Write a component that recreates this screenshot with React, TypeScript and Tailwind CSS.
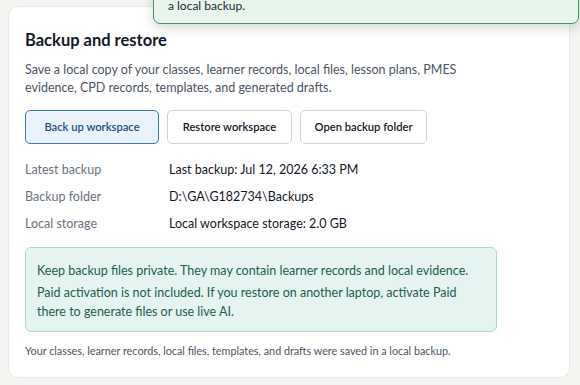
import React from "react";

const font = { fontFamily: 'Lato, "Noto Sans", sans-serif' };

export default function App() {
  return (
    <div className="relative w-[580px] h-[385px] overflow-hidden bg-[#f3f5f1]" style={font}>
      <div className="absolute left-[8px] top-[6px] w-[562px] h-[372px] rounded-[10px] border border-[#e6e9ec] bg-white px-[16px] pt-[21px]">
        <h2 className="text-[16.5px] leading-[24px] font-bold text-[#111827]">Backup and restore</h2>
        <p className="mt-[9px] text-[12.5px] leading-[18px] text-[#4b5563] w-[470px]">
          Save a local copy of your classes, learner records, local files, lesson plans, PMES evidence, CPD records, templates, and generated drafts.
        </p>
        <div className="mt-[13px] flex gap-[8px]">
          <button className="h-[34px] w-[134px] rounded-[5px] border border-[#3b78b8] bg-[#eaf3fd] text-[11.2px] font-semibold text-[#1d4f86]">
            Back up workspace
          </button>
          <button className="h-[34px] w-[125px] rounded-[5px] border border-[#cbd3de] bg-white text-[11.2px] font-semibold text-[#111827]">
            Restore workspace
          </button>
          <button className="h-[34px] w-[127px] rounded-[5px] border border-[#cbd3de] bg-white text-[11.2px] font-semibold text-[#111827]">
            Open backup folder
          </button>
        </div>
        <div className="mt-[17px] grid grid-cols-[144px_1fr] gap-y-[9px] text-[12.5px] leading-[18px]">
          <div className="text-[#6b7280]">Latest backup</div>
          <div className="text-[#111827]">Last backup: Jul 12, 2026 6:33 PM</div>
          <div className="text-[#6b7280]">Backup folder</div>
          <div className="text-[#111827]">D:\GA\G182734\Backups</div>
          <div className="text-[#6b7280]">Local storage</div>
          <div className="text-[#111827]">Local workspace storage: 2.0 GB</div>
        </div>
        <div className="mt-[14px] w-[472px] rounded-[6px] border border-[#a6dccd] bg-[#e5f4f0] px-[11px] pt-[13px] pb-[10px] text-[12.5px] leading-[19px] text-[#1e5d4f]">
          <p>Keep backup files private. They may contain learner records and local evidence.</p>
          <p className="mt-[3px]">Paid activation is not included. If you restore on another laptop, activate Paid there to generate files or use live AI.</p>
        </div>
        <p className="mt-[11px] text-[10.8px] leading-[16px] text-[#4b5563]">
          Your classes, learner records, local files, templates, and drafts were saved in a local backup.
        </p>
      </div>
      <div className="absolute left-[153px] top-[-40px] w-[426px] h-[64px] rounded-[7px] border border-[#3f9a63] bg-[#e8f5ec] shadow-[0_4px_12px_rgba(0,0,0,0.15)] px-[14px] flex items-end pb-[9px]">
        <span className="text-[12px] leading-[16px] text-[#1f2937]">a local backup.</span>
      </div>
    </div>
  );
}
